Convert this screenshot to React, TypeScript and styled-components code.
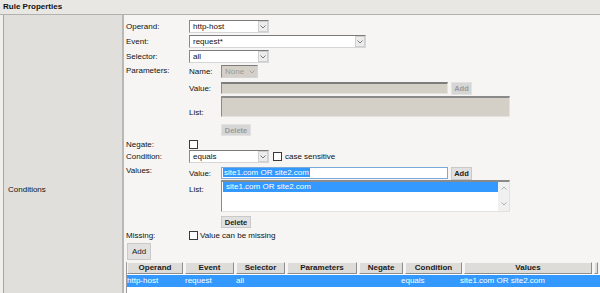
import React from "react";
import styled, { createGlobalStyle } from "styled-components";

const Global = createGlobalStyle`
  html, body { margin: 0; padding: 0; overflow: hidden; background: #f6f5f3; }
  body { font-family: "Liberation Sans", Arial, sans-serif; font-size: 8px; color: #000; }
  * { box-sizing: border-box; }
`;

const Page = styled.div`
  width: 600px;
`;

const TitleBar = styled.div`
  height: 15px;
  padding: 0 3px;
  background: #e9e7e3;
  border-bottom: 1px solid #b3b1ad;
  font-weight: bold;
  font-size: 8px;
  line-height: 14px;
  color: #111;
`;

const Body = styled.div`
  display: flex;
  padding-left: 3px;
  background: #f0efec;
`;

const SideCell = styled.div`
  width: 121px;
  flex: none;
  background: #e1dfdb;
  border-left: 1px solid #a9a7a3;
  border-right: 2px solid #bab8b4;
  display: flex;
  align-items: center;
  padding-left: 4px;
  color: #111;
`;

const Content = styled.div`
  flex: 1;
  background: #f6f5f3;
  padding: 5px 0 0 2px;
  display: flex;
  flex-direction: column;
`;

const FieldRow = styled.div<{ $mt?: number; $align?: string }>`
  display: grid;
  grid-template-columns: 63px 1fr;
  align-items: ${(p) => p.$align || "center"};
  margin-top: ${(p) => p.$mt || 0}px;
`;

const SubGrid = styled.div`
  display: flex;
  flex-direction: column;
`;

const SubRow = styled.div<{ $mt?: number; $align?: string }>`
  display: grid;
  grid-template-columns: 32px 1fr;
  align-items: ${(p) => p.$align || "center"};
  margin-top: ${(p) => p.$mt || 0}px;
`;

const Label = styled.span<{ $nudge?: number }>`
  line-height: 9px;
  color: #111;
  white-space: nowrap;
  padding-top: ${(p) => p.$nudge || 0}px;
`;

const SelectBox = styled.div<{ $w: number; $disabled?: boolean }>`
  width: ${(p) => p.$w}px;
  height: 13px;
  display: flex;
  align-items: stretch;
  background: ${(p) => (p.$disabled ? "#d4d0c8" : "#fff")};
  border: 1px solid;
  border-color: #7b7b7b #d6d6d6 #d6d6d6 #8a8a8a;
`;

const SelectText = styled.span<{ $disabled?: boolean }>`
  flex: 1;
  padding-left: 3px;
  line-height: 11px;
  color: ${(p) => (p.$disabled ? "#9c9a96" : "#111")};
  white-space: nowrap;
  overflow: hidden;
`;

const SelectArrow = styled.span<{ $disabled?: boolean }>`
  width: 10px;
  flex: none;
  background: ${(p) => (p.$disabled ? "#d4d0c8" : "#ececec")};
  border: 1px solid #cfcfcf;
  display: flex;
  align-items: center;
  justify-content: center;
`;

const Chevron = ({ up, color = "#7a7a7a" }: { up?: boolean; color?: string }) => (
  <svg width="6" height="4" viewBox="0 0 6 4">
    <polyline
      points={up ? "0.5,3.5 3,1 5.5,3.5" : "0.5,0.5 3,3 5.5,0.5"}
      fill="none"
      stroke={color}
      strokeWidth="1"
    />
  </svg>
);

const Select = ({ w, value, disabled }: { w: number; value: string; disabled?: boolean }) => (
  <SelectBox $w={w} $disabled={disabled}>
    <SelectText $disabled={disabled}>{value}</SelectText>
    <SelectArrow $disabled={disabled}>
      <Chevron color={disabled ? "#a8a6a2" : "#7a7a7a"} />
    </SelectArrow>
  </SelectBox>
);

const InlineRow = styled.div`
  display: flex;
  align-items: flex-start;
  gap: 3px;
`;

const TextInput = styled.div<{ $disabled?: boolean; $focused?: boolean }>`
  width: 227px;
  height: 12px;
  background: ${(p) => (p.$disabled ? "#d4d0c8" : "#fff")};
  border: 1px solid;
  border-color: ${(p) =>
    p.$focused ? "#7aa9dc" : "#7d7d7d #e4e2de #e4e2de #8a8a8a"};
  border-top-width: ${(p) => (p.$focused ? 1 : 2)}px;
  padding-left: 1px;
  line-height: 10px;
  white-space: nowrap;
  overflow: hidden;
`;

const Selected = styled.span`
  background: #3399ff;
  color: #fff;
  padding: 0 1px;
`;

const Button = styled.div<{ $disabled?: boolean; $w: number; $h: number; $bold?: boolean }>`
  width: ${(p) => p.$w}px;
  height: ${(p) => p.$h}px;
  background: ${(p) => (p.$disabled ? "#d6d6d6" : "#e1e1e1")};
  border: 1px solid ${(p) => (p.$disabled ? "#e2e2e2" : "#c9c9c9")};
  color: ${(p) => (p.$disabled ? "#9a9a9a" : "#222")};
  font-size: ${(p) => (p.$bold ? 7.5 : 8)}px;
  font-weight: ${(p) => (p.$bold ? "bold" : "normal")};
  display: flex;
  align-items: center;
  justify-content: center;
`;

const ListBox = styled.div<{ $h: number; $disabled?: boolean }>`
  width: 289px;
  height: ${(p) => p.$h}px;
  background: ${(p) => (p.$disabled ? "#d4d0c8" : "#fff")};
  border: 1px solid;
  border-color: #8a8a8a #e4e2de #e4e2de #8a8a8a;
  border-top-width: 2px;
  display: flex;
`;

const ListItems = styled.div`
  flex: 1;
  padding: 0 0 0 1px;
`;

const ListItem = styled.div`
  height: 10px;
  line-height: 10px;
  padding-left: 3px;
  background: #3399ff;
  color: #fff;
`;

const ScrollBar = styled.div`
  width: 11px;
  flex: none;
  background: #f0f0f0;
  display: flex;
  flex-direction: column;
  align-items: center;
  justify-content: space-between;
  padding: 4px 0 5px;
`;

const CheckBox = styled.span`
  width: 9px;
  height: 9px;
  flex: none;
  background: #fff;
  border: 1px solid #3a3a3a;
  display: inline-block;
`;

const CheckRow = styled.div<{ $gap: number }>`
  display: flex;
  align-items: center;
  gap: ${(p) => p.$gap}px;
  color: #111;
`;

const AddRow = styled.div`
  margin-top: 3px;
  padding-left: 1px;
`;

const Table = styled.div`
  margin-top: 2px;
  background: #fff;
  border-left: 1px solid #9a9a9a;
  min-height: 101px;
`;

const HeaderRow = styled.div`
  display: grid;
  grid-template-columns: 58px 51px 51px 72px 46px 59px 130px 1fr;
  background: #f6f5f3;
`;

const HeaderCell = styled.div`
  height: 12px;
  margin-right: 2px;
  background: #dedcd8;
  border: 1px solid;
  border-color: #f4f4f4 #8e8e8e #8e8e8e #f4f4f4;
  font-weight: bold;
  text-align: center;
  line-height: 10px;
  color: #1a1a1a;
  white-space: nowrap;
  overflow: hidden;
`;

const DataRow = styled.div`
  margin-top: 1px;
  height: 12px;
  display: grid;
  grid-template-columns: 58px 51px 51px 72px 42px 59px 1fr;
  background: #3399ff;
  color: #fff;
  line-height: 12px;
`;

const DataCell = styled.div`
  white-space: nowrap;
`;

const headers = ["Operand", "Event", "Selector", "Parameters", "Negate", "Condition", "Values", ""];
const row = ["http-host", "request", "all", "", "", "equals", "site1.com OR site2.com"];

export default function App() {
  return (
    <Page>
      <Global />
      <TitleBar>Rule Properties</TitleBar>
      <Body>
        <SideCell>Conditions</SideCell>
        <Content>
          <FieldRow>
            <Label>Operand:</Label>
            <Select w={80} value="http-host" />
          </FieldRow>
          <FieldRow $mt={2}>
            <Label>Event:</Label>
            <Select w={177} value="request*" />
          </FieldRow>
          <FieldRow $mt={2}>
            <Label>Selector:</Label>
            <Select w={80} value="all" />
          </FieldRow>
          <FieldRow $mt={2} $align="start">
            <Label $nudge={1}>Parameters:</Label>
            <SubGrid>
              <SubRow>
                <Label>Name:</Label>
                <Select w={37} value="None" disabled />
              </SubRow>
              <SubRow $mt={4} $align="start">
                <Label $nudge={2}>Value:</Label>
                <InlineRow>
                  <TextInput $disabled />
                  <Button $w={21} $h={13} $disabled $bold>
                    Add
                  </Button>
                </InlineRow>
              </SubRow>
              <SubRow $mt={1} $align="end">
                <Label>List:</Label>
                <ListBox $h={21} $disabled />
              </SubRow>
              <SubRow $mt={7}>
                <span />
                <Button $w={30} $h={12} $disabled $bold>
                  Delete
                </Button>
              </SubRow>
            </SubGrid>
          </FieldRow>
          <FieldRow $mt={4}>
            <Label>Negate:</Label>
            <CheckRow $gap={0}>
              <CheckBox />
            </CheckRow>
          </FieldRow>
          <FieldRow $mt={1}>
            <Label>Condition:</Label>
            <CheckRow $gap={4}>
              <Select w={80} value="equals" />
              <CheckRow $gap={3}>
                <CheckBox />
                case sensitive
              </CheckRow>
            </CheckRow>
          </FieldRow>
          <FieldRow $mt={3} $align="start">
            <Label>Values:</Label>
            <SubGrid>
              <SubRow $mt={1} $align="start">
                <Label $nudge={2}>Value:</Label>
                <InlineRow>
                  <TextInput $focused>
                    <Selected>site1.com OR site2.com</Selected>
                  </TextInput>
                  <Button $w={21} $h={13} $bold>
                    Add
                  </Button>
                </InlineRow>
              </SubRow>
              <SubRow $align="start">
                <Label $nudge={5}>List:</Label>
                <ListBox $h={32}>
                  <ListItems>
                    <ListItem>site1.com OR site2.com</ListItem>
                  </ListItems>
                  <ScrollBar>
                    <Chevron up color="#b0b0b0" />
                    <Chevron color="#b0b0b0" />
                  </ScrollBar>
                </ListBox>
              </SubRow>
              <SubRow $mt={4}>
                <span />
                <Button $w={30} $h={12} $bold>
                  Delete
                </Button>
              </SubRow>
            </SubGrid>
          </FieldRow>
          <FieldRow $mt={3}>
            <Label>Missing:</Label>
            <CheckRow $gap={2}>
              <CheckBox />
              Value can be missing
            </CheckRow>
          </FieldRow>
          <AddRow>
            <Button $w={24} $h={17}>
              Add
            </Button>
          </AddRow>
          <Table>
            <HeaderRow>
              {headers.map((h, i) => (
                <HeaderCell key={i}>{h}</HeaderCell>
              ))}
            </HeaderRow>
            <DataRow>
              {row.map((c, i) => (
                <DataCell key={i}>{c}</DataCell>
              ))}
            </DataRow>
          </Table>
        </Content>
      </Body>
    </Page>
  );
}
